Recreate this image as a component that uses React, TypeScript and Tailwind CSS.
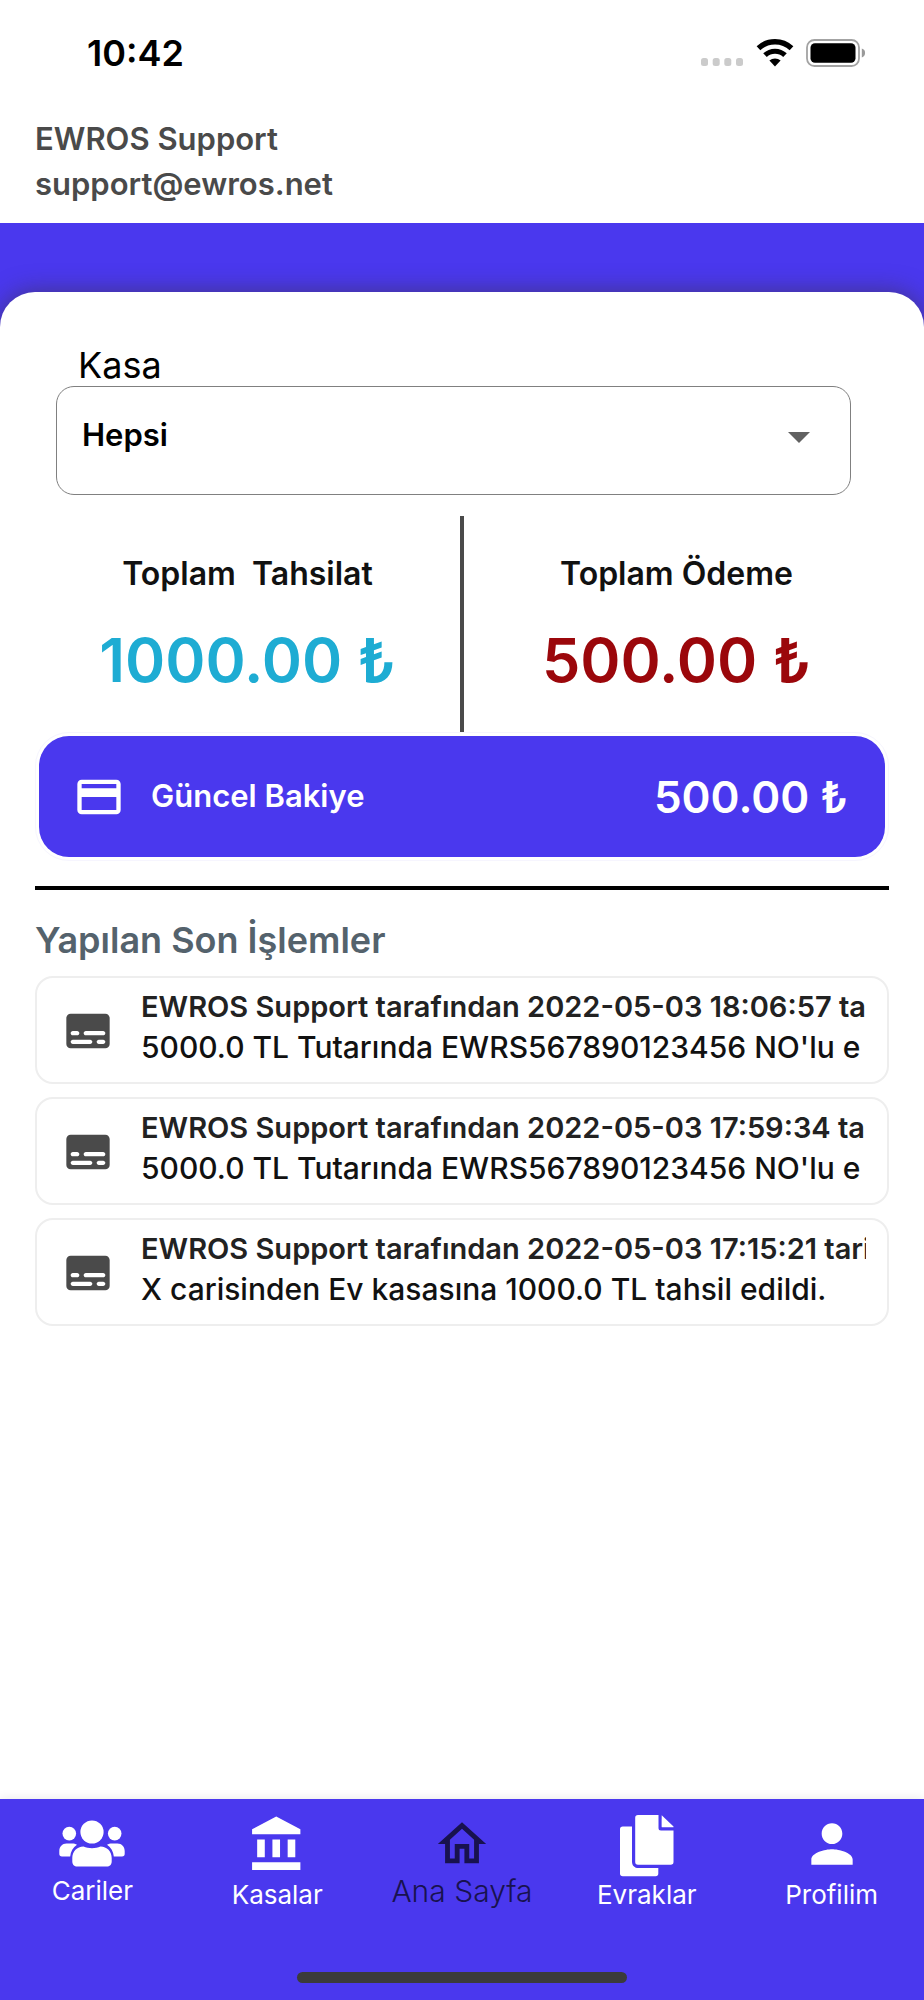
import { useState } from "react";

interface Transaction {
  id: number;
  title: string;
  detail: string;
}

const transactions: Transaction[] = [
  {
    id: 1,
    title: "EWROS Support tarafından 2022-05-03 18:06:57 tarihinde",
    detail: "5000.0 TL Tutarında EWRS567890123456 NO'lu e",
  },
  {
    id: 2,
    title: "EWROS Support tarafından 2022-05-03 17:59:34 tarihinde",
    detail: "5000.0 TL Tutarında EWRS567890123456 NO'lu e",
  },
  {
    id: 3,
    title: "EWROS Support tarafından 2022-05-03 17:15:21 tarihinde",
    detail: "X carisinden Ev kasasına 1000.0 TL tahsil edildi.",
  },
];

function StatusBar() {
  return (
    <div className="flex items-center justify-between h-[106px] pl-[87px] pr-[58px]">
      <span className="text-[36px] leading-[40px] font-semibold text-black">10:42</span>
      <div className="flex items-center">
        <svg width="43" height="28" viewBox="0 0 43 28" fill="#cbcbcb">
          <rect x="0" y="19" width="7" height="8" rx="2.5" />
          <rect x="11.7" y="19" width="7" height="8" rx="2.5" />
          <rect x="23.3" y="19" width="7" height="8" rx="2.5" />
          <rect x="35" y="19" width="7" height="8" rx="2.5" />
        </svg>
        <svg className="ml-3" width="38" height="28" viewBox="0 0 38 28" fill="none" stroke="#000">
          <path d="M2.5 9.3A24 24 0 0 1 35.5 9.3" strokeWidth="5.4" />
          <path d="M9 16.2A14.6 14.6 0 0 1 29 16.2" strokeWidth="5.2" />
          <path d="M13.4 21.6A8.4 8.4 0 0 1 24.6 21.6L19 27.4Z" fill="#000" stroke="none" />
        </svg>
        <svg className="ml-3" width="60" height="28" viewBox="0 0 60 28">
          <rect x="1" y="1" width="52" height="26" rx="7.5" fill="none" stroke="#a3a3a3" strokeWidth="1.8" />
          <rect x="4.5" y="4.3" width="45" height="19.4" rx="4.5" fill="#000" />
          <path d="M55.8 9.6A4.6 4.6 0 0 1 55.8 18.4Z" fill="#9a9a9a" />
        </svg>
      </div>
    </div>
  );
}

function CardIcon() {
  return (
    <svg width="52" height="52" viewBox="0 0 24 24" fill="currentColor">
      <path d="M20 4H4c-1.11 0-1.99.89-1.99 2L2 18c0 1.11.89 2 2 2h16c1.11 0 2-.89 2-2V6c0-1.11-.89-2-2-2zm0 14H4v-6h16v6zm0-10H4V6h16v2z" />
    </svg>
  );
}

function SubtitlesIcon() {
  return (
    <svg className="shrink-0" width="52" height="52" viewBox="0 0 24 24" fill="currentColor">
      <path d="M20 4H4c-1.1 0-2 .9-2 2v12c0 1.1.9 2 2 2h16c1.1 0 2-.9 2-2V6c0-1.1-.9-2-2-2zM5 12h2c.55 0 1 .45 1 1s-.45 1-1 1H5c-.55 0-1-.45-1-1s.45-1 1-1zm8 6H5c-.55 0-1-.45-1-1s.45-1 1-1h8c.55 0 1 .45 1 1s-.45 1-1 1zm6 0h-2c-.55 0-1-.45-1-1s.45-1 1-1h2c.55 0 1 .45 1 1s-.45 1-1 1zm0-4h-8c-.55 0-1-.45-1-1s.45-1 1-1h8c.55 0 1 .45 1 1s-.45 1-1 1z" />
    </svg>
  );
}

function PeopleIcon() {
  return (
    <svg width="66" height="48" viewBox="0 0 66 48" fill="currentColor">
      <circle cx="33" cy="12" r="11.6" />
      <circle cx="10.3" cy="13.6" r="6.8" />
      <circle cx="55.7" cy="13.6" r="6.8" />
      <path d="M7.5 23.5H13c2 0 3.5.4 5 1.3-4 2.7-6.4 7-6.8 11.7H3C1.2 36.5.3 35.5.3 33.8V31c0-4.3 3-7.5 7.2-7.5z" />
      <path d="M58.5 23.5H53c-2 0-3.5.4-5 1.3 4 2.7 6.4 7 6.8 11.7H63c1.8 0 2.7-1 2.7-2.7V31c0-4.3-3-7.5-7.2-7.5z" />
      <path d="M24.5 26.5c5 2.2 12 2.2 17 0C48 26.5 52.7 31.5 52.7 38v3.5c0 3-2 5-5 5H18.3c-3 0-5-2-5-5V38c0-6.5 4.7-11.5 11.2-11.5z" />
    </svg>
  );
}

function BankIcon() {
  return (
    <svg width="61" height="61" viewBox="0 0 24 24" fill="currentColor">
      <path d="M4 10v7h3v-7H4zm6 0v7h3v-7h-3zM2 22h19v-3H2v3zm14-12v7h3v-7h-3zM11.5 1L2 6v2h19V6l-9.5-5z" />
    </svg>
  );
}

function HomeIcon() {
  return (
    <svg width="58" height="58" viewBox="0 0 24 24" fill="currentColor">
      <path d="M12 5.69l5 4.5V18h-2v-6H9v6H7v-7.81l5-4.5M12 3L2 12h3v8h6v-6h2v6h6v-8h3L12 3z" />
    </svg>
  );
}

function DocumentsIcon() {
  return (
    <svg width="54" height="62" viewBox="0 0 54 62" fill="currentColor">
      <path d="M18 0H38.5V13c0 1.7.8 2.5 2.5 2.5H53.5V47c0 1.8-1 2.8-2.8 2.8H18c-1.8 0-2.8-1-2.8-2.8V2.8C15.2 1 16.2 0 18 0z" />
      <path d="M41.7 0.2L53.5 11.5V12.3H42.5c-.6 0-.9-.3-.9-.9z" />
      <path d="M2.8 11.5H12V46.5c0 4.2 2.5 6.6 6.6 6.6H38.3V58.5c0 1.7-1 2.7-2.7 2.7H2.8C1 61.2 0 60.2 0 58.5V14.3c0-1.8 1-2.8 2.8-2.8z" />
    </svg>
  );
}

function PersonIcon() {
  return (
    <svg width="62" height="62" viewBox="0 0 24 24" fill="currentColor">
      <path d="M12 12c2.21 0 4-1.79 4-4s-1.79-4-4-4-4 1.79-4 4 1.79 4 4 4zm0 2c-2.67 0-8 1.34-8 4v2h16v-2c0-2.66-5.33-4-8-4z" />
    </svg>
  );
}

const navItems = [
  { label: "Cariler", icon: <PeopleIcon />, color: "text-white", box: "h-[86px] pt-1", text: "text-[26px]" },
  { label: "Kasalar", icon: <BankIcon />, color: "text-white", box: "h-[90px]", text: "text-[26px]" },
  { label: "Ana Sayfa", icon: <HomeIcon />, color: "text-[#18124f]", box: "h-[86px] pt-1", text: "text-[30px] font-light" },
  { label: "Evraklar", icon: <DocumentsIcon />, color: "text-white", box: "h-[90px] pt-1", text: "text-[26px]" },
  { label: "Profilim", icon: <PersonIcon />, color: "text-white", box: "h-[90px]", text: "text-[26px]" },
];

function BottomNav() {
  return (
    <nav className="flex flex-col h-[201px] bg-[#4a38ee] shadow-[0_0_10px_rgba(0,0,0,0.1)]">
      <div className="grid grid-cols-5">
        {navItems.map((item) => (
          <a key={item.label} href="#" className={`flex flex-col items-center ${item.color}`}>
            <span className={`flex items-center justify-center ${item.box}`}>{item.icon}</span>
            <span className={`leading-[12px] whitespace-nowrap ${item.text}`}>{item.label}</span>
          </a>
        ))}
      </div>
      <div className="mt-auto mb-[17px] mx-auto w-[330px] h-[11px] rounded-full bg-[#3b3b3b]" />
    </nav>
  );
}

function App() {
  const [kasa, setKasa] = useState("Hepsi");

  return (
    <div className="flex flex-col min-h-screen bg-white font-['Inter',sans-serif]">
      <StatusBar />
      <header className="h-[117px] pt-[10px] px-[35px] text-[31px] leading-[45px] font-semibold text-[#4a4a4a]">
        <p>EWROS Support</p>
        <p>support@ewros.net</p>
      </header>

      <div className="flex flex-col flex-1 bg-[#4a38ee] pt-[69px]">
        <main className="flex-1 bg-white rounded-t-[35px] px-[35px] pt-[52px] shadow-[0_0_24px_rgba(60,50,60,0.6)]">
          <div className="pl-[21px] pr-[38px]">
            <label htmlFor="kasa" className="block pl-[22px] text-[36px] leading-[42px] text-black">
              Kasa
            </label>
            <div className="relative">
              <select
                id="kasa"
                value={kasa}
                onChange={(e) => setKasa(e.target.value)}
                className="block w-full h-[109px] pl-[25px] pb-[10px] appearance-none bg-white border border-[#808080] rounded-[18px] text-[31px] font-semibold text-black"
              >
                <option>Hepsi</option>
              </select>
              <svg className="absolute right-[41px] top-[46px] pointer-events-none" width="22" height="11" viewBox="0 0 22 11">
                <path d="M0 0H22L11 11Z" fill="#616161" />
              </svg>
            </div>
          </div>

          <div className="flex mt-[21px] h-[216px] text-center">
            <div className="flex-1 pt-[37px]">
              <p className="text-[32px] leading-[42px] font-semibold text-[#111] whitespace-pre">Toplam  Tahsilat</p>
              <p className="mt-[29px] text-[61px] leading-[72px] font-semibold text-[#1eacd3]">1000.00 ₺</p>
            </div>
            <div className="w-1 bg-[#4a4a4a]" />
            <div className="flex-1 pt-[37px]">
              <p className="text-[32px] leading-[42px] font-semibold text-[#111]">Toplam Ödeme</p>
              <p className="mt-[29px] text-[61px] leading-[72px] font-semibold text-[#9b070b]">500.00 ₺</p>
            </div>
          </div>

          <div className="p-[3px] border border-[#f6f5fe] rounded-[34px]">
            <div className="flex items-center h-[121px] rounded-[30px] bg-[#4a38ee] pl-[34px] pr-[37px] text-white">
              <CardIcon />
              <span className="ml-[26px] text-[31px] font-semibold">Güncel Bakiye</span>
              <span className="ml-auto text-[44px] font-semibold">500.00 ₺</span>
            </div>
          </div>

          <hr className="mt-[25px] border-0 h-1 bg-black" />

          <h2 className="mt-[26px] text-[36px] leading-[48px] font-semibold text-[#54626c]">Yapılan Son İşlemler</h2>
          <ul className="mt-[12px] flex flex-col gap-[13px]">
            {transactions.map((item) => (
              <li
                key={item.id}
                className="flex items-center h-[108px] border-2 border-[#eeeeee] rounded-[18px] pl-[25px] pr-[21px] pt-[2px] text-[#4a4a4a]"
              >
                <SubtitlesIcon />
                <div className="ml-[27px] -mt-2 flex-1 min-w-0 overflow-hidden whitespace-nowrap">
                  <p className="text-[29px] leading-[40px] font-semibold text-[#222]">{item.title}</p>
                  <p className="text-[30px] leading-[40px] font-medium text-[#111]">{item.detail}</p>
                </div>
              </li>
            ))}
          </ul>
        </main>
      </div>

      <BottomNav />
    </div>
  );
}

export default App;
